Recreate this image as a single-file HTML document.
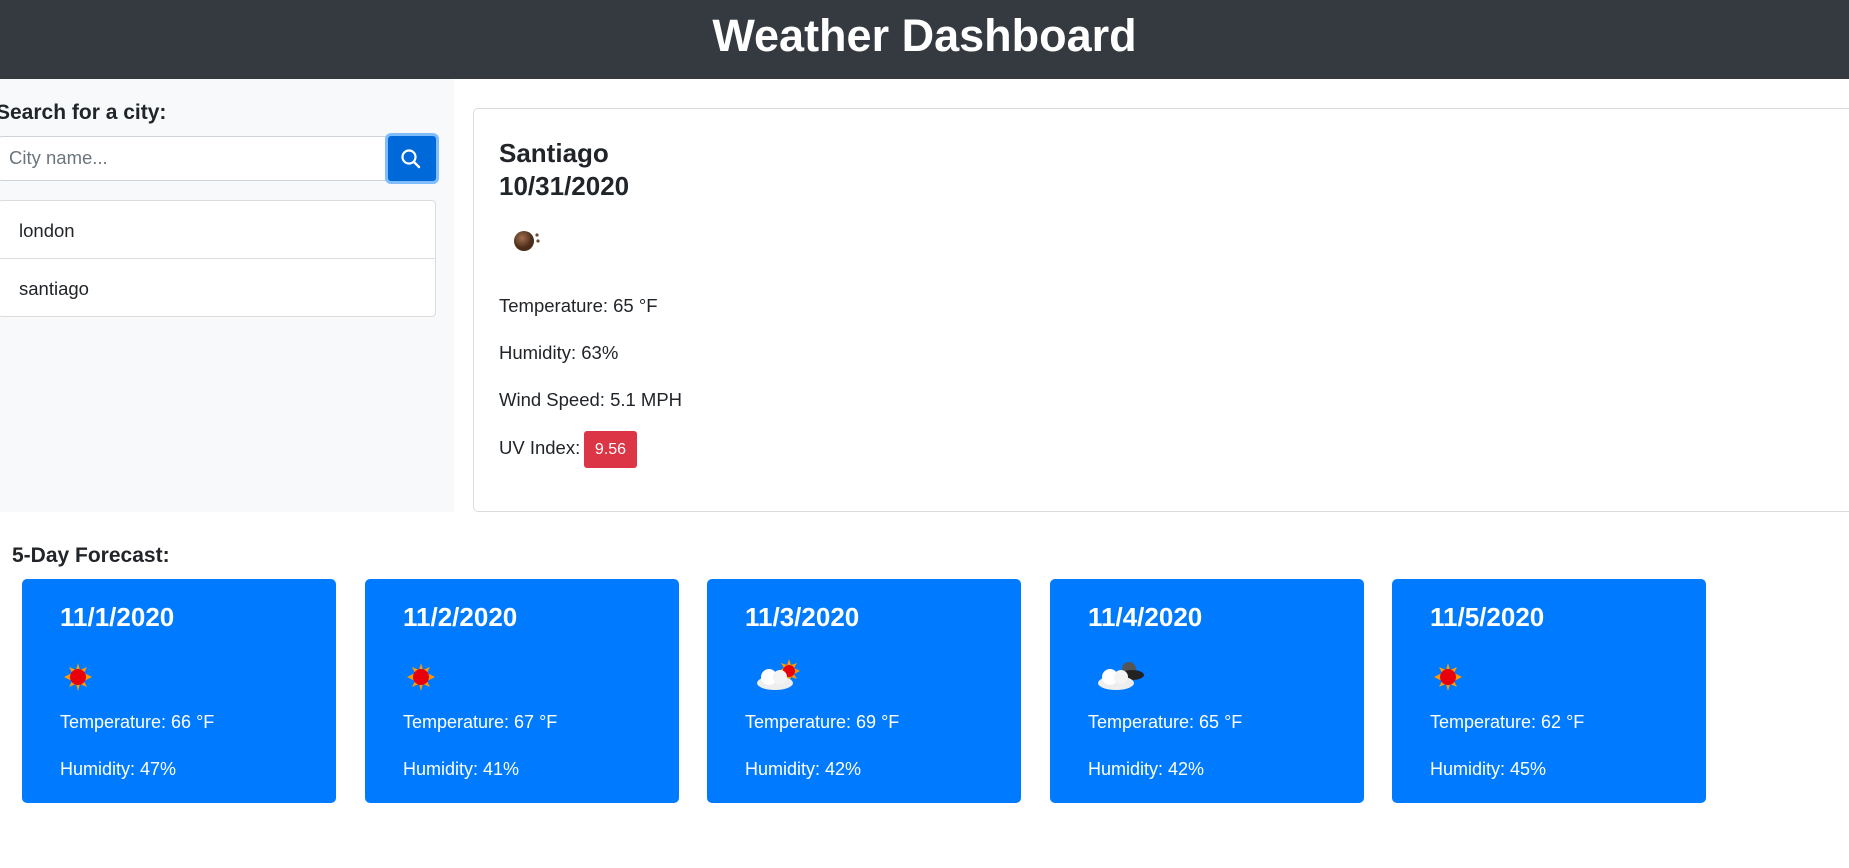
<!DOCTYPE html>
<html><head><meta charset="utf-8"><style>
*{box-sizing:border-box;margin:0;padding:0}
body{width:1849px;height:868px;overflow:hidden;background:#fff;font-family:"Liberation Sans",sans-serif;color:#212529;position:relative}
.abs{position:absolute}
.hdr{left:0;top:0;width:1849px;height:79px;background:#343a40;color:#fff;text-align:center;font-size:45px;font-weight:bold;line-height:71px}
.side{left:0;top:79px;width:454px;height:433px;background:#f8f9fa}
.t19{font-size:18.5px;white-space:nowrap}
.card{left:473px;top:108px;width:1400px;height:404px;border:1px solid #dcdcdc;border-radius:5px;background:#fff}
.fc{width:314px;height:224px;top:579px;background:#007bff;border-radius:5px;color:#fff}
.fc .d{position:absolute;left:38px;top:23px;font-size:26px;font-weight:bold}
.fc .ic{position:absolute;left:40px;top:82px}
.fc .tp{position:absolute;left:38px;top:133px;font-size:18px}
.fc .hm{position:absolute;left:38px;top:180px;font-size:18px}
</style></head><body>
<div class="abs hdr">Weather Dashboard</div>
<div class="abs side"></div>
<div class="abs" style="left:-4px;top:101px;font-size:21px;font-weight:bold">Search for a city:</div>
<div class="abs" style="left:-2px;top:136px;width:390px;height:45px;background:#fff;border:1px solid #ced4da;border-radius:4px 0 0 4px"></div>
<div class="abs t19" style="left:9px;top:147px;color:#6c757d">City name...</div>
<div class="abs" style="left:385px;top:133px;width:54px;height:51px;border:3px solid #80bdff;border-radius:6px;background:#0069d9"></div>
<svg class="abs" style="left:399px;top:147px" width="24" height="24" viewBox="0 0 24 24"><circle cx="10" cy="10" r="6.5" stroke="#fff" stroke-width="2.2" fill="none"/><line x1="14.8" y1="14.8" x2="20" y2="20" stroke="#fff" stroke-width="2.4" stroke-linecap="round"/></svg>
<div class="abs" style="left:-2px;top:200px;width:438px;height:117px;background:#fff;border:1px solid #dcdcdc;border-radius:4px"></div>
<div class="abs" style="left:0;top:258px;width:435px;height:1px;background:#dcdcdc"></div>
<div class="abs t19" style="left:19px;top:220px">london</div>
<div class="abs t19" style="left:19px;top:278px">santiago</div>
<div class="abs card"></div>
<div class="abs" style="left:499px;top:137px;font-size:26px;font-weight:bold;line-height:33px">Santiago<br>10/31/2020</div>
<svg class="abs" style="left:510px;top:226px" width="36" height="30"><defs><radialGradient id="m" cx="0.4" cy="0.35"><stop offset="0" stop-color="#a07050"/><stop offset="1" stop-color="#4a2c18"/></radialGradient></defs><circle cx="14" cy="15" r="10" fill="url(#m)"/><circle cx="27" cy="9" r="1.6" fill="#6a4a30"/><circle cx="28" cy="15" r="1.6" fill="#6a4a30"/></svg>
<div class="abs t19" style="left:499px;top:295px">Temperature: 65 °F</div>
<div class="abs t19" style="left:499px;top:342px">Humidity: 63%</div>
<div class="abs t19" style="left:499px;top:389px">Wind Speed: 5.1 MPH</div>
<div class="abs t19" style="left:499px;top:437px">UV Index:</div>
<div class="abs" style="left:584px;top:431px;width:53px;height:37px;background:#dc3545;border-radius:3px;color:#fff;font-size:16px;text-align:center;line-height:37px">9.56</div>
<div class="abs" style="left:12px;top:544px;font-size:21px;font-weight:bold">5-Day Forecast:</div>

<div class="abs fc" style="left:22px"><div class="d">11/1/2020</div><div class="ic"><svg width="32" height="32" viewBox="0 0 32 32"><polygon points="16,2 18,9 25,6 22,12 30,16 22,20 25,26 18,23 16,30 14,23 7,26 10,20 2,16 10,12 7,6 14,9" fill="#ff9a00"/><circle cx="16" cy="16" r="8" fill="#e8000a"/></svg></div><div class="tp">Temperature: 66 °F</div><div class="hm">Humidity: 47%</div></div>
<div class="abs fc" style="left:365px"><div class="d">11/2/2020</div><div class="ic"><svg width="32" height="32" viewBox="0 0 32 32"><polygon points="16,2 18,9 25,6 22,12 30,16 22,20 25,26 18,23 16,30 14,23 7,26 10,20 2,16 10,12 7,6 14,9" fill="#ff9a00"/><circle cx="16" cy="16" r="8" fill="#e8000a"/></svg></div><div class="tp">Temperature: 67 °F</div><div class="hm">Humidity: 41%</div></div>
<div class="abs fc" style="left:707px"><div class="d">11/3/2020</div><div class="ic" style="left:46px;top:78px"><svg width="50" height="36" viewBox="0 0 50 36"><polygon points="36,2 38,8 44,6 41,11 47,14 41,17 44,22 38,20 36,26 34,20 28,22 31,17 25,14 31,11 28,6 34,8" fill="#ff9a00"/><circle cx="36" cy="14" r="6" fill="#e8000a"/><ellipse cx="22" cy="26" rx="18" ry="7" fill="#eee"/><circle cx="16" cy="20" r="8" fill="#fff"/><circle cx="27" cy="20" r="7" fill="#f4f4f4"/></svg></div><div class="tp">Temperature: 69 °F</div><div class="hm">Humidity: 42%</div></div>
<div class="abs fc" style="left:1050px"><div class="d">11/4/2020</div><div class="ic" style="left:44px;top:78px"><svg width="52" height="36" viewBox="0 0 52 36"><circle cx="35" cy="12" r="7" fill="#555"/><ellipse cx="38" cy="18" rx="12" ry="5" fill="#222"/><ellipse cx="22" cy="26" rx="18" ry="7" fill="#eee"/><circle cx="16" cy="20" r="8" fill="#fff"/><circle cx="27" cy="20" r="7" fill="#f4f4f4"/></svg></div><div class="tp">Temperature: 65 °F</div><div class="hm">Humidity: 42%</div></div>
<div class="abs fc" style="left:1392px"><div class="d">11/5/2020</div><div class="ic"><svg width="32" height="32" viewBox="0 0 32 32"><polygon points="16,2 18,9 25,6 22,12 30,16 22,20 25,26 18,23 16,30 14,23 7,26 10,20 2,16 10,12 7,6 14,9" fill="#ff9a00"/><circle cx="16" cy="16" r="8" fill="#e8000a"/></svg></div><div class="tp">Temperature: 62 °F</div><div class="hm">Humidity: 45%</div></div>
</body></html>
